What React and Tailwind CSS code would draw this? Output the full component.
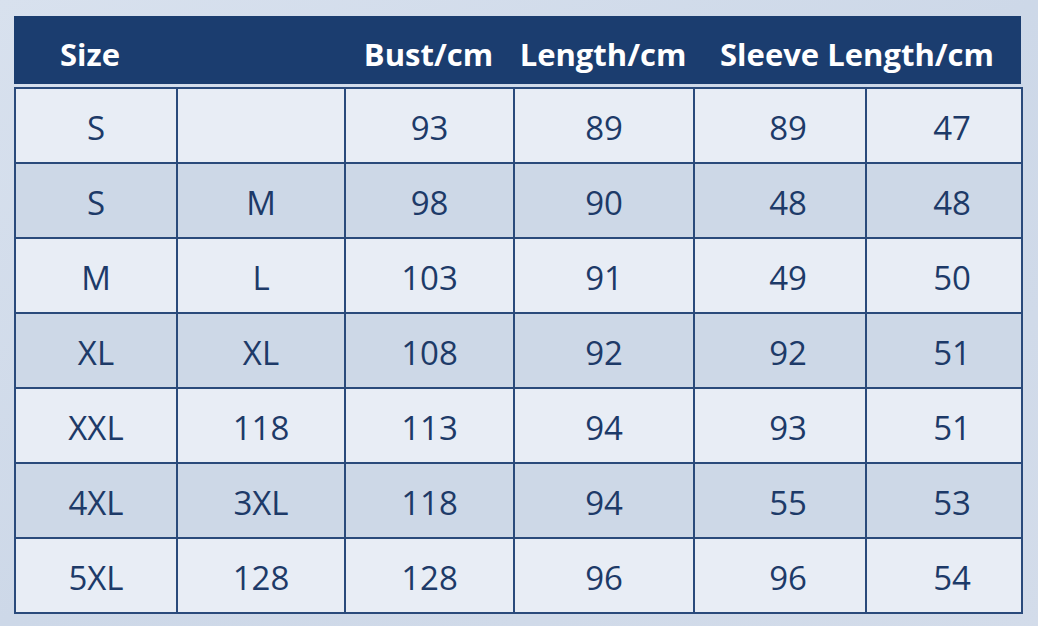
import React from 'react';

const rows = [
  ['S', '', '93', '89', '89', '47'],
  ['S', 'M', '98', '90', '48', '48'],
  ['M', 'L', '103', '91', '49', '50'],
  ['XL', 'XL', '108', '92', '92', '51'],
  ['XXL', '118', '113', '94', '93', '51'],
  ['4XL', '3XL', '118', '94', '55', '53'],
  ['5XL', '128', '128', '96', '96', '54'],
];

const cols = 'grid grid-cols-[162px_168px_169px_180px_172px_156px]';

const App = () => {
  return (
    <div
      className="w-[1038px] h-[626px] bg-gradient-to-br from-[#d8e1ee] via-[#cdd8e8] to-[#d3dcea] pt-[16px] pl-[14px]"
      style={{ fontFamily: '"Open Sans", "Noto Sans", sans-serif' }}
    >
      <div className={`${cols} h-[68px] w-[1007px] bg-[#1b3d6f] text-white font-bold text-[31px] items-center pt-[8px]`}>
        <div className="text-center pr-[10px]">Size</div>
        <div></div>
        <div className="text-center">Bust/cm</div>
        <div className="text-center">Length/cm</div>
        <div className="col-span-2 text-center">Sleeve Length/cm</div>
      </div>
      <div className={`${cols} mt-[3px] w-[1009px] border-l-2 border-t-2 border-[#2a4a7b]`}>
        {rows.map((r, i) =>
          r.map((c, j) => (
            <div
              key={`${i}-${j}`}
              className={`h-[75px] flex items-center justify-center pt-[4px] border-r-2 border-b-2 border-[#2a4a7b] text-[33px] text-[#1d3a68] ${
                j >= 4 ? 'pl-[16px]' : ''
              } ${i % 2 === 0 ? 'bg-[#e8edf5]' : 'bg-[#cdd8e7]'}`}
            >
              {c}
            </div>
          ))
        )}
      </div>
    </div>
  );
};

export default App;
